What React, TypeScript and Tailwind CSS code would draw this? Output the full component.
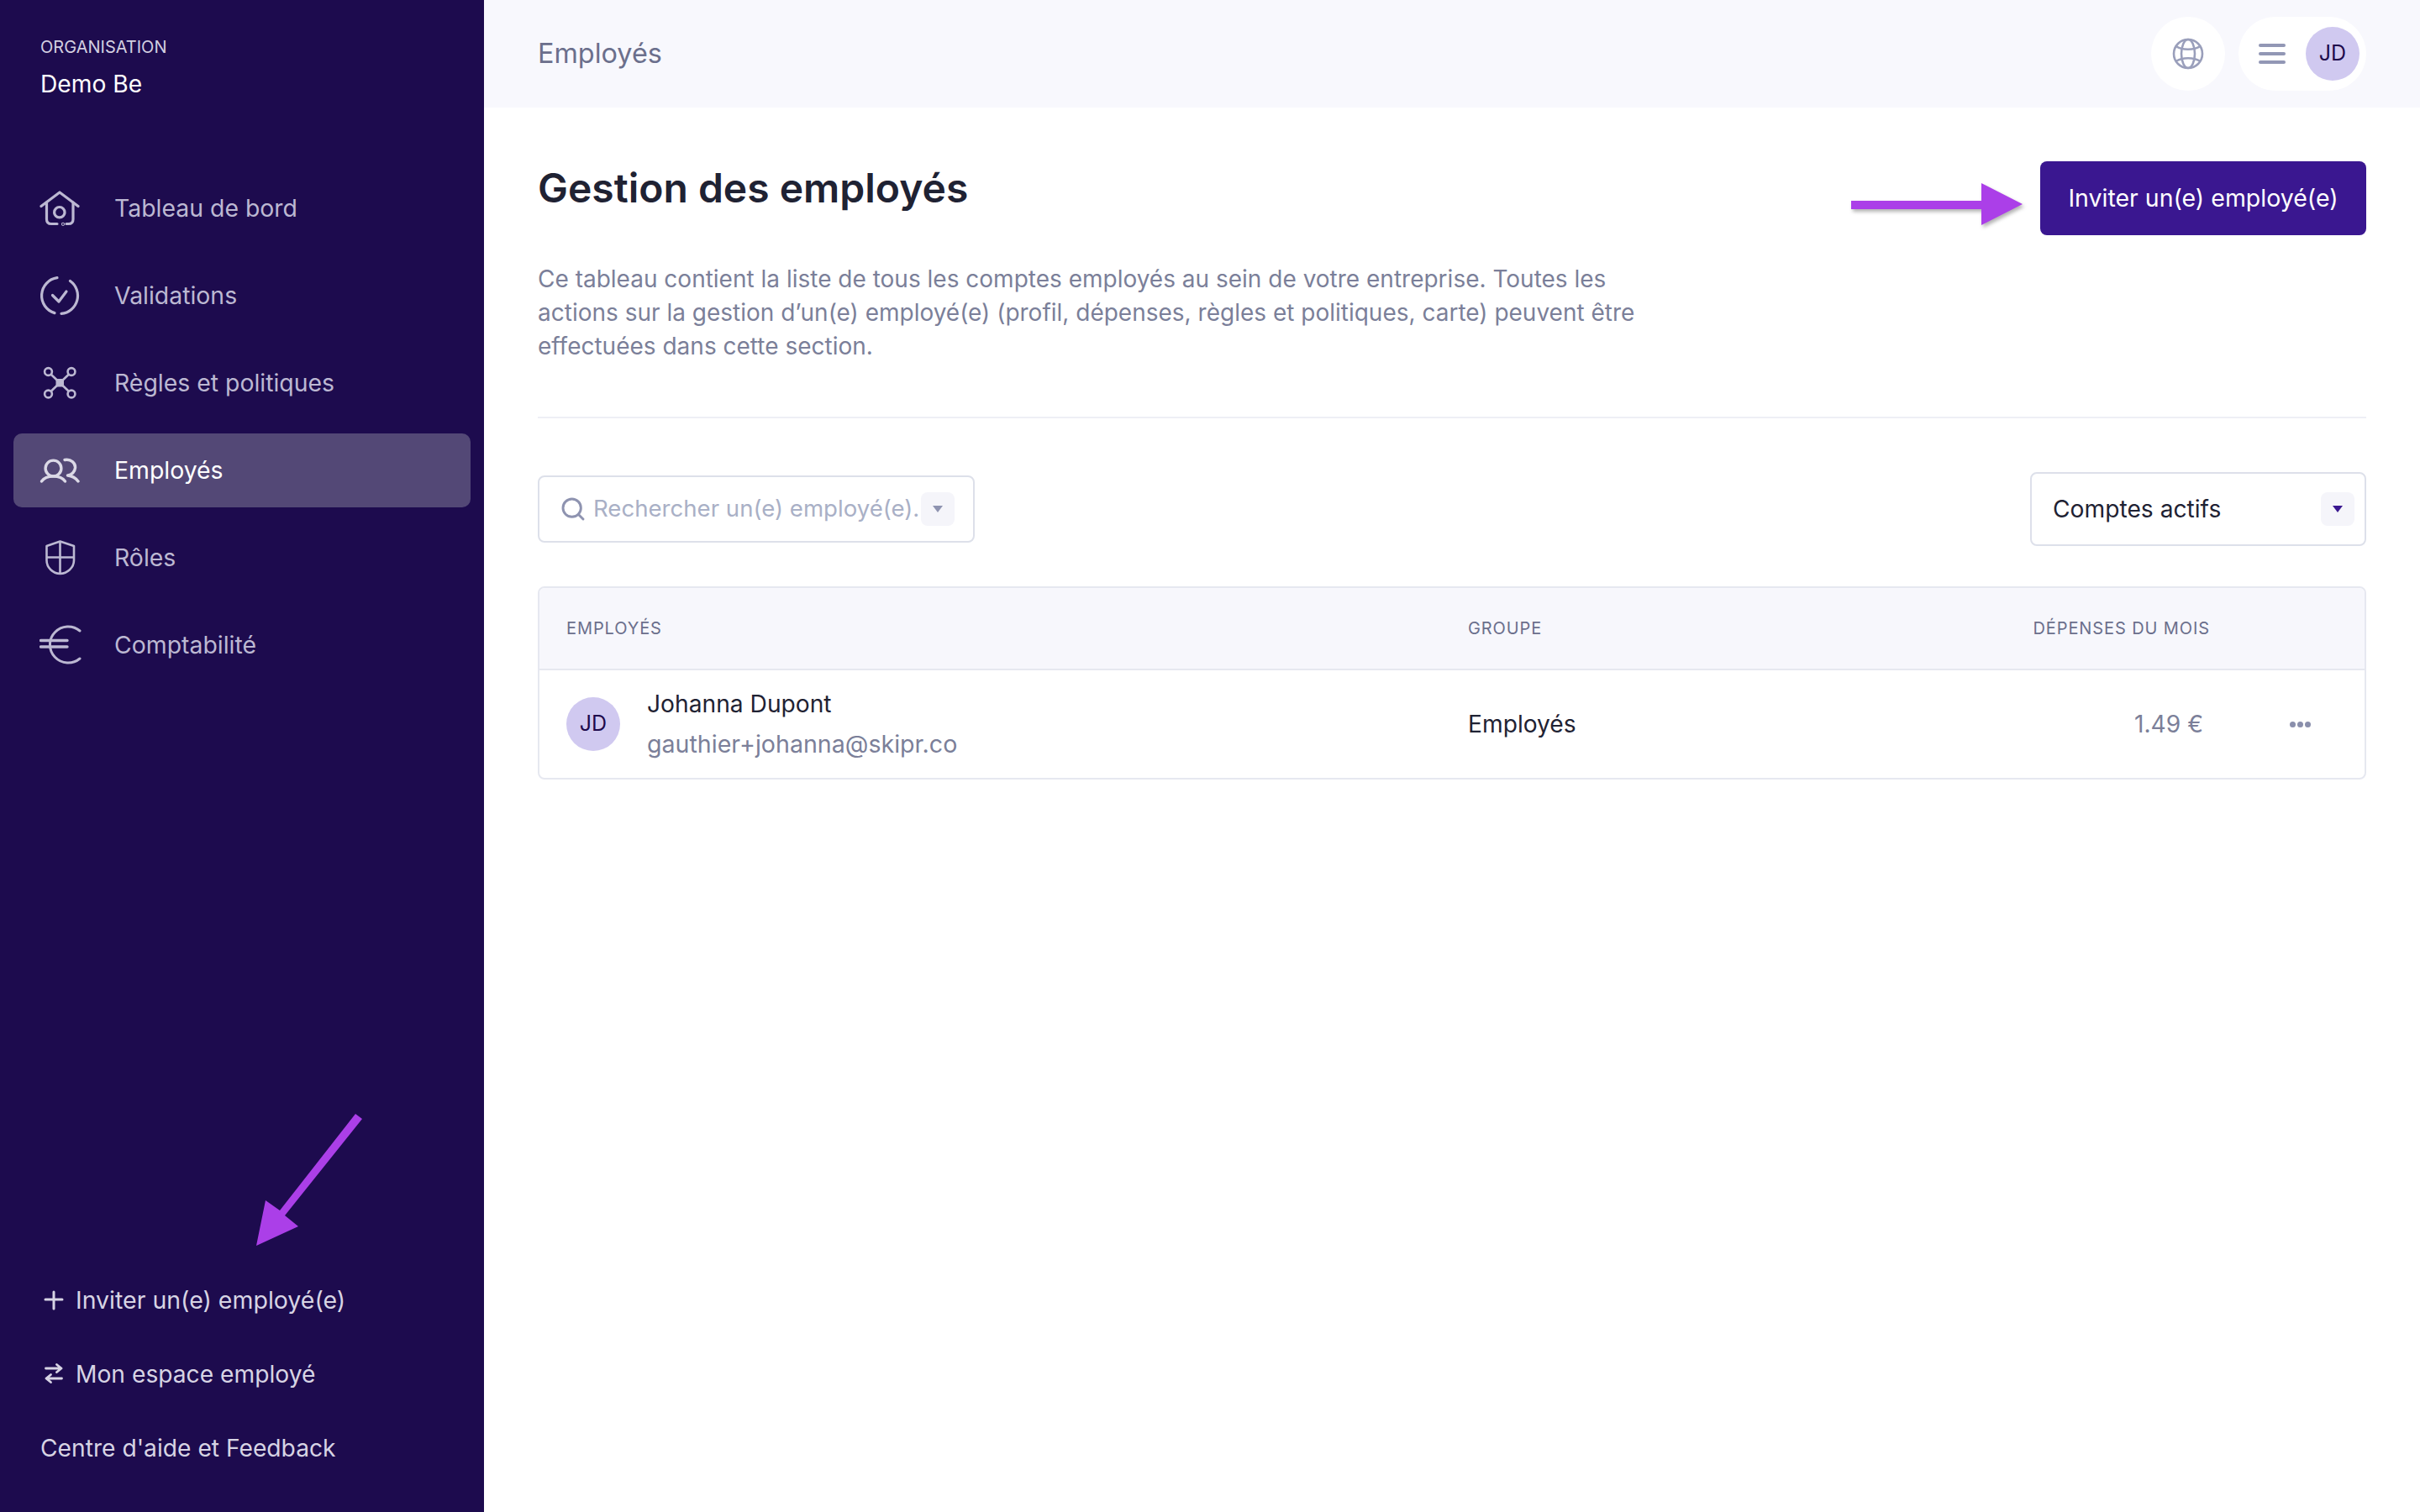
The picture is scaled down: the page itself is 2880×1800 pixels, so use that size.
import { Search } from 'lucide-react';

const navItems = [
  { id: 'home', label: 'Tableau de bord', icon: HomeIcon },
  { id: 'validations', label: 'Validations', icon: CheckIcon },
  { id: 'rules', label: 'Règles et politiques', icon: NetworkIcon },
  { id: 'employees', label: 'Employés', icon: UsersIcon, active: true },
  { id: 'roles', label: 'Rôles', icon: ShieldIcon },
  { id: 'accounting', label: 'Comptabilité', icon: EuroIcon },
];

function HomeIcon() {
  return (
    <svg width="48" height="48" viewBox="0 0 48 48" fill="none" stroke="currentColor" strokeWidth="3.2" strokeLinecap="round" strokeLinejoin="round">
      <path d="M2 21.5 24 5 46 21.5" />
      <path d="M8.5 17 V37 q0 5.5 5.5 5.5 H21" />
      <path d="M40 17 V37 q0 5.5 -5.5 5.5 H32" />
      <circle cx="23.8" cy="28.7" r="6.2" />
      <circle cx="28" cy="42.8" r="0.5" />
    </svg>
  );
}

function CheckIcon() {
  return (
    <svg width="48" height="48" viewBox="0 0 48 48" fill="none" stroke="currentColor" strokeWidth="3.2" strokeLinecap="round" strokeLinejoin="round">
      <path d="M21 2.7 A21.5 21.5 0 0 0 18 44.6" />
      <path d="M26 45.4 A21.5 21.5 0 0 0 36.5 6.5" />
      <path d="M15.5 23.5 23 31 32 19" />
    </svg>
  );
}

function NetworkIcon() {
  return (
    <svg width="48" height="48" viewBox="0 0 48 48" fill="none" stroke="currentColor" strokeWidth="2.6">
      <circle cx="10.5" cy="10.5" r="4.4" />
      <circle cx="38" cy="10.5" r="4.4" />
      <circle cx="10.5" cy="37" r="4.4" />
      <circle cx="38" cy="37" r="4.4" />
      <path d="M14 14 34.5 33.5 M34.5 14 14 33.5" />
      <rect x="19.5" y="19" width="9.5" height="9.5" fill="currentColor" stroke="none" />
    </svg>
  );
}

function UsersIcon() {
  return (
    <svg width="48" height="48" viewBox="0 0 48 48" fill="none" stroke="currentColor" strokeWidth="3.4" strokeLinecap="round" strokeLinejoin="round" className="text-[#dbd9e6]">
      <circle cx="16.5" cy="21.5" r="9.4" />
      <path d="M2.5 37 C8 29 25 29 30.5 37" />
      <path d="M30 11.5 C37.5 10 43 15.5 42.5 21 C42 25.5 38.5 29.5 33.5 30 C39 30.5 43 33 46 37" />
    </svg>
  );
}

function ShieldIcon() {
  return (
    <svg width="48" height="48" viewBox="0 0 48 48" fill="none" stroke="currentColor" strokeWidth="2.6" strokeLinejoin="round">
      <path d="M24.5 4.5 41 10 V27 C41 36 33 42.5 24.5 43 C16 42.5 8.5 36 8.5 27 V10 Z" />
      <path d="M24.5 4.5 V43 M8.5 23.5 H41" />
    </svg>
  );
}

function EuroIcon() {
  return (
    <svg width="52" height="48" viewBox="0 0 52 48" fill="none" stroke="currentColor" strokeWidth="3" strokeLinecap="round">
      <path d="M48 7 A21.6 21.6 0 1 0 48 40" />
      <path d="M1.5 18.5 H33 M1.5 26 H33" strokeWidth="3.4" />
    </svg>
  );
}

function PlusIcon() {
  return (
    <svg width="24" height="24" viewBox="0 0 24 24" fill="none" stroke="currentColor" strokeWidth="3" strokeLinecap="round">
      <path d="M12 2 V22 M2 11 H22" />
    </svg>
  );
}

function SwapIcon() {
  return (
    <svg width="24" height="26" viewBox="0 0 24 26" fill="none" stroke="currentColor" strokeWidth="2.8" strokeLinecap="round" strokeLinejoin="round">
      <path d="M2.5 6 H21 M15.5 1.5 L21 6 15.5 10.5" />
      <path d="M21.5 18 H3 M8.5 13.5 L3 18 8.5 22.5" />
    </svg>
  );
}

function GlobeIcon() {
  return (
    <svg width="38" height="38" viewBox="0 0 38 38" fill="none" stroke="#9a9fbb" strokeWidth="2.6">
      <circle cx="19" cy="19" r="17" />
      <ellipse cx="19" cy="19" rx="8" ry="17" />
      <path d="M4.5 10 C12 15 26 15 33.5 10 M4.5 28 C12 23 26 23 33.5 28" />
    </svg>
  );
}

function Caret({ color }: { color: string }) {
  return (
    <div className="w-10 h-10 rounded-lg bg-[#f5f5fa] flex items-center justify-center shrink-0">
      <svg width="12" height="10" viewBox="0 0 12 10">
        <path d="M0 1 H12 L6 9 Z" fill={color} />
      </svg>
    </div>
  );
}

function Avatar() {
  return (
    <div className="w-16 h-16 rounded-full bg-[#d0c9f0] text-[#1e0a4c] text-[25px] flex items-center justify-center shrink-0">
      JD
    </div>
  );
}

export default function App() {
  return (
    <div className="relative w-full h-screen flex bg-white overflow-hidden font-['Inter',sans-serif] text-[28.2px]">
      {/* Sidebar */}
      <aside className="w-[576px] shrink-0 h-full bg-[#1d0b4e] flex flex-col">
        <div className="px-12 pt-[41px] h-[204px]">
          <p className="text-[20px] leading-[30px] text-[#d3cfe0]">ORGANISATION</p>
          <p className="mt-[14px] leading-[30px] text-white">Demo Be</p>
        </div>

        <nav className="flex flex-col gap-4 px-4 text-[28.4px]">
          {navItems.map((item) => {
            const Icon = item.icon;
            return (
              <div
                key={item.id}
                className={`h-[88px] flex items-center pl-[31px] rounded-[10px] ${
                  item.active ? 'bg-[#534876] text-white' : 'text-[#bcb8d2]'
                }`}
              >
                <div className="w-[89px] flex items-center shrink-0">
                  <Icon />
                </div>
                <span>{item.label}</span>
              </div>
            );
          })}
        </nav>

        <div className="mt-auto pb-8 text-[#d7d4e4]">
          <div className="h-[88px] flex items-center pl-[52px]">
            <PlusIcon />
            <span className="ml-[14px] text-[28.5px]">Inviter un(e) employé(e)</span>
          </div>
          <div className="h-[88px] flex items-center pl-[52px]">
            <SwapIcon />
            <span className="ml-[14px]">Mon espace employé</span>
          </div>
          <div className="h-[88px] flex items-center pl-12">
            <span>Centre d'aide et Feedback</span>
          </div>
        </div>
      </aside>

      {/* Main */}
      <main className="flex-1 min-w-0 flex flex-col">
        <header className="h-32 bg-[#f8f8fd] px-16 flex items-center justify-between shrink-0">
          <span className="text-[32.4px] text-[#6b6f8c]">Employés</span>
          <div className="flex items-center gap-4">
            <div className="w-[88px] h-[88px] rounded-full bg-white flex items-center justify-center">
              <GlobeIcon />
            </div>
            <div className="w-[152px] h-[88px] rounded-full bg-white flex items-center pl-6 pr-2 justify-between">
              <div className="w-8 flex flex-col gap-1.5">
                <div className="h-1 rounded-full bg-[#9297b5]" />
                <div className="h-1 rounded-full bg-[#9297b5]" />
                <div className="h-1 rounded-full bg-[#9297b5]" />
              </div>
              <Avatar />
            </div>
          </div>
        </header>

        <div className="px-16 pt-16">
          <div className="flex items-start justify-between">
            <div className="w-[1320px]">
              <h1 className="text-[48px] leading-[64px] font-semibold text-[#1f2233]">Gestion des employés</h1>
              <p className="mt-14 text-[28px] leading-10 text-[#7b7f99]">
                Ce tableau contient la liste de tous les comptes employés au sein de votre entreprise. Toutes les actions sur la gestion d’un(e) employé(e) (profil, dépenses, règles et politiques, carte) peuvent être effectuées dans cette section.
              </p>
            </div>
            <button className="w-[388px] h-[88px] rounded-lg bg-[#3a1790] text-white text-[28.5px] flex items-center justify-center shrink-0">
              Inviter un(e) employé(e)
            </button>
          </div>

          <div className="mt-16 h-0.5 bg-[#eeeff5]" />

          <div className="mt-16 flex items-center justify-between">
            <div className="w-[520px] h-20 rounded-lg border-2 border-[#dde0ea] flex items-center pl-6 pr-[22px]">
              <Search size={32} strokeWidth={2.2} className="text-[#8e93b0] shrink-0" />
              <span className="ml-2 flex-1 min-w-0 whitespace-nowrap text-[27.6px] text-[#a9b0c6]">Rechercher un(e) employé(e).</span>
              <Caret color="#8e93b0" />
            </div>
            <div className="w-[400px] h-[88px] rounded-lg border-2 border-[#dde0ea] flex items-center justify-between pl-[25px] pr-3">
              <span className="text-[#1f2233]">Comptes actifs</span>
              <Caret color="#3a1790" />
            </div>
          </div>

          {/* Table */}
          <div className="mt-[48px] rounded-lg border-2 border-[#e6e8f0] overflow-hidden">
            <div className="h-[98px] bg-[#f7f7fc] border-b-2 border-[#e6e8f0] flex items-center text-[20px] tracking-[0.9px] text-[#6b6f8c]">
              <div className="w-[1105px] pl-[32px]">EMPLOYÉS</div>
              <div>GROUPE</div>
              <div className="ml-auto pr-[184px]">DÉPENSES DU MOIS</div>
            </div>
            <div className="h-[128px] flex items-center">
              <div className="w-[1105px] pl-[32px] flex items-center gap-[32px]">
                <Avatar />
                <div>
                  <p className="leading-[48px] text-[#1f2233]">Johanna Dupont</p>
                  <p className="text-[28.6px] leading-[48px] text-[#7b7f99]">gauthier+johanna@skipr.co</p>
                </div>
              </div>
              <div className="text-[#1f2233]">Employés</div>
              <div className="ml-auto text-[#7b7f99]">1.49 €</div>
              <div className="ml-[103px] mr-[64px] flex gap-[2px]">
                <div className="w-[7px] h-[7px] rounded-full bg-[#8a8fac]" />
                <div className="w-[7px] h-[7px] rounded-full bg-[#8a8fac]" />
                <div className="w-[7px] h-[7px] rounded-full bg-[#8a8fac]" />
              </div>
            </div>
          </div>
        </div>
      </main>

      {/* Annotation arrows over the capture */}
      <svg className="absolute left-[300px] top-[1320px]" width="140" height="170" viewBox="300 1320 140 170">
        <path d="M423 1326 431 1332 339 1447 355 1460 305 1483 316 1429 333 1441 Z" fill="#ab3fe8" />
      </svg>
      <svg className="absolute left-[2200px] top-[215px]" width="214" height="62" viewBox="2200 215 214 62">
        <path d="M2203 239 H2358 V218 L2407 243 2358 268 V249 H2203 Z" fill="#ab3fe8" className="drop-shadow-[2px_3px_2px_rgba(0,0,0,0.3)]" />
      </svg>
    </div>
  );
}
